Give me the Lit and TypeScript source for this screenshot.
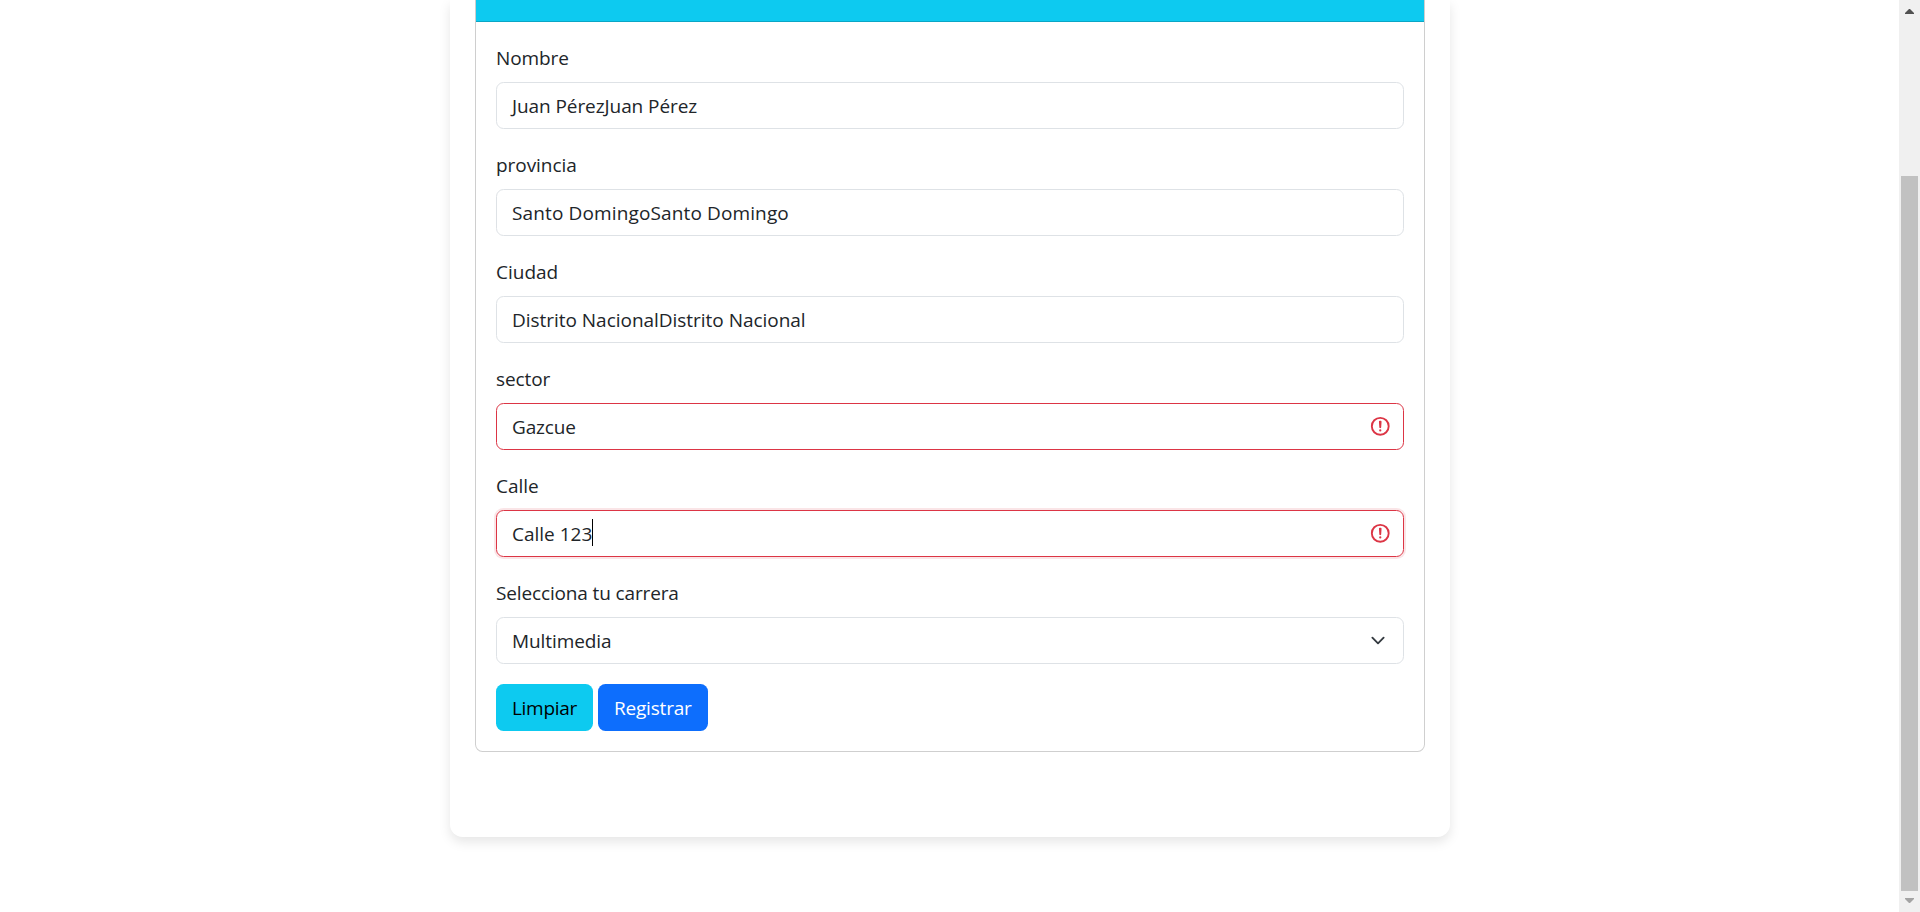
import { LitElement, html, css, svg, nothing } from "lit";
import { classMap } from "lit/directives/class-map.js";
import { styleMap } from "lit/directives/style-map.js";

interface Field {
  label: string;
  value: string;
  labelSpacing: number;
  valueSpacing: number;
  invalid?: boolean;
  focused?: boolean;
  select?: boolean;
}

const FIELDS: Field[] = [
  { label: "Nombre", value: "Juan PérezJuan Pérez", labelSpacing: -0.1, valueSpacing: -0.08 },
  { label: "provincia", value: "Santo DomingoSanto Domingo", labelSpacing: -0.06, valueSpacing: 0.13 },
  { label: "Ciudad", value: "Distrito NacionalDistrito Nacional", labelSpacing: 0, valueSpacing: -0.03 },
  { label: "sector", value: "Gazcue", labelSpacing: -0.1, valueSpacing: -0.15, invalid: true },
  { label: "Calle", value: "Calle 123", labelSpacing: 0, valueSpacing: 0, invalid: true, focused: true },
  { label: "Selecciona tu carrera", value: "Multimedia", labelSpacing: -0.14, valueSpacing: -0.08, select: true },
];

const spacing = (n: number) => styleMap({ letterSpacing: `${n}px` });

class AppRoot extends LitElement {
  static styles = css`
    :host {
      display: flex;
      height: 912px;
      overflow: hidden;
      background: #fff;
      color: #212529;
      font-family: "Open Sans", "Noto Sans", sans-serif;
      font-size: 19px;
      line-height: 30px;
    }
    * { box-sizing: border-box; }
    .page { flex: 1; display: flex; justify-content: center; align-items: flex-start; padding-left: 1px; }
    .container {
      width: 1000px;
      height: 837px;
      padding: 0 25px;
      background: #fff;
      border-radius: 0 0 12.5px 12.5px;
      box-shadow: 0 5px 12px rgba(0, 0, 0, 0.1);
    }
    .card {
      border: 1px solid rgba(0, 0, 0, 0.19);
      border-top: 0;
      border-radius: 0 0 7.5px 7.5px;
    }
    .header {
      height: 22px;
      background: #0dcaf0;
      border-bottom: 1px solid rgba(0, 0, 0, 0.175);
    }
    .body { padding: 20px; display: flex; flex-direction: column; gap: 20px; }
    .field { display: flex; flex-direction: column; gap: 10px; white-space: nowrap; }
    .label { height: 30px; padding-top: 1px; }
    .control {
      height: 47px;
      display: flex;
      align-items: center;
      padding: 0 11.25px 0 15px;
      border: 1px solid #dee2e6;
      border-radius: 7.5px;
    }
    .control.invalid { border-color: #dc3545; }
    .control.focused { box-shadow: 0 0 0 2px rgba(220, 53, 69, 0.13); }
    .control.select { padding-right: 15px; }
    .caret { width: 1px; height: 27px; margin-top: -2px; background: #000; }
    .icon { margin-left: auto; display: block; }
    .actions { display: flex; gap: 5px; }
    .btn {
      height: 47px;
      border: 0;
      border-radius: 7.5px;
      padding: 0 0 0 16px;
      font: inherit;
      text-align: left;
    }
    .info { width: 97px; background: #0dcaf0; color: #000; letter-spacing: -0.3px; }
    .primary { width: 110px; background: #0d6efd; color: #fff; letter-spacing: -0.2px; }
    .scrollbar {
      width: 21px;
      background: #f0f0f0;
      display: flex;
      flex-direction: column;
      align-items: flex-start;
    }
    .arrow { display: block; width: 21px; height: 21px; flex: none; }
    .track { width: 17px; margin-left: 2px; flex: 1; padding-top: 155px; display: flex; }
    .thumb { flex: 1; background: #c1c1c1; }
  `;

  private alertIcon() {
    return html`<svg class="icon" width="22.5" height="22.5" viewBox="0 0 12 12" fill="none" stroke="#dc3545">
      ${svg`<circle cx="6" cy="6" r="4.5"/><path stroke-linejoin="round" d="M5.8 3.6h.4L6 6.5z"/><circle cx="6" cy="8.2" r=".6" fill="#dc3545" stroke="none"/>`}
    </svg>`;
  }

  private chevron() {
    return html`<svg class="icon" width="20" height="15" viewBox="0 0 16 16">
      <path fill="none" stroke="#343a40" stroke-linecap="round" stroke-linejoin="round" stroke-width="2" d="m2 5 6 6 6-6"/>
    </svg>`;
  }

  private field(f: Field) {
    return html`<div class="field">
      <label class="label" style=${spacing(f.labelSpacing)}>${f.label}</label>
      <div class=${classMap({ control: true, invalid: !!f.invalid, focused: !!f.focused, select: !!f.select })}>
        <span style=${spacing(f.valueSpacing)}>${f.value}</span>
        ${f.focused ? html`<i class="caret"></i>` : nothing}
        ${f.invalid ? this.alertIcon() : nothing}
        ${f.select ? this.chevron() : nothing}
      </div>
    </div>`;
  }

  render() {
    return html`
      <main class="page">
        <section class="container">
          <div class="card">
            <div class="header"></div>
            <form class="body">
              ${FIELDS.map((f) => this.field(f))}
              <div class="actions">
                <button type="button" class="btn info">Limpiar</button>
                <button type="button" class="btn primary">Registrar</button>
              </div>
            </form>
          </div>
        </section>
      </main>
      <aside class="scrollbar">
        <svg class="arrow" viewBox="0 0 21 21"><path fill="#505050" d="M6 14h9v-1L11 9h-1l-4 4z"/></svg>
        <div class="track"><div class="thumb"></div></div>
        <svg class="arrow" viewBox="0 0 21 21"><path fill="#a3a3a3" d="M6 7h9v1l-4 4h-1l-4-4z"/></svg>
      </aside>`;
  }
}
customElements.define("app-root", AppRoot);
